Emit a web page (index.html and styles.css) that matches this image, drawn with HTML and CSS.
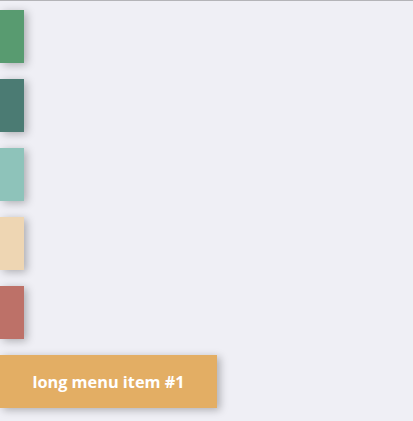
FILE: index.html
```html
<!DOCTYPE html>
<html>
<head>
<meta charset="utf-8">
<link rel="stylesheet" href="styles.css">
</head>
<body>
<nav class="menu">
  <div class="item c1"></div>
  <div class="item c2"></div>
  <div class="item c3"></div>
  <div class="item c4"></div>
  <div class="item c5"></div>
  <div class="item c6 wide">long menu item #1</div>
</nav>
</body>
</html>
```
FILE: styles.css
```css
html, body {
  margin: 0;
  padding: 0;
  background: #efeff5;
  height: 100%;
}
body {
  border-top: 1px solid #b4b4b8;
  box-sizing: border-box;
  font-family: "Open Sans", "Noto Sans", sans-serif;
}
.menu {
  display: flex;
  flex-direction: column;
  align-items: flex-start;
  gap: 16px;
  padding-top: 9px;
}
.item {
  width: 24px;
  height: 53px;
  box-shadow: 3px 2px 8px rgba(0, 0, 0, 0.28);
}
.c1 { background: #589b70; }
.c2 { background: #4b7b73; }
.c3 { background: #8ec3ba; }
.c4 { background: #eed6b3; }
.c5 { background: #bd7168; }
.c6 { background: #e3ae64; }
.wide {
  width: 217px;
  display: flex;
  align-items: center;
  justify-content: center;
  color: #fff;
  font-weight: 700;
  font-size: 16.3px;
}
```
